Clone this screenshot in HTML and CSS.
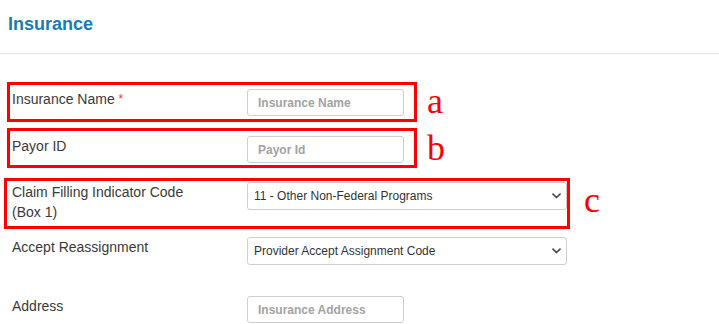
FILE: index.html
```html
<!DOCTYPE html>
<html lang="en">
<head>
<meta charset="utf-8">
<title>Insurance</title>
<link rel="stylesheet" href="styles.css">
</head>
<body>
<header class="header">
  <h1 class="title">Insurance</h1>
</header>
<form class="form">
  <div class="row row--a">
    <label class="label">Insurance Name <span class="req">*</span></label>
    <input class="input" type="text" placeholder="Insurance Name">
    <span class="mark mark--a"></span>
    <span class="tag tag--a">a</span>
  </div>
  <div class="row row--b">
    <label class="label">Payor ID</label>
    <input class="input" type="text" placeholder="Payor Id">
    <span class="mark mark--b"></span>
    <span class="tag tag--b">b</span>
  </div>
  <div class="row row--c">
    <label class="label">Claim Filling Indicator Code (Box 1)</label>
    <span class="select-wrap">
      <select class="select"><option>11 - Other Non-Federal Programs</option></select>
      <svg class="chev" width="9" height="6" viewBox="0 0 9 6"><path d="M1 1.2l3.5 3.3 3.5-3.3" fill="none" stroke="#4a4a4a" stroke-width="1.7" stroke-linecap="round" stroke-linejoin="round"/></svg>
    </span>
    <span class="mark mark--c"></span>
    <span class="tag tag--c">c</span>
  </div>
  <div class="row row--d">
    <label class="label">Accept Reassignment</label>
    <span class="select-wrap">
      <select class="select"><option>Provider Accept Assignment Code</option></select>
      <svg class="chev" width="9" height="6" viewBox="0 0 9 6"><path d="M1 1.2l3.5 3.3 3.5-3.3" fill="none" stroke="#4a4a4a" stroke-width="1.7" stroke-linecap="round" stroke-linejoin="round"/></svg>
    </span>
  </div>
  <div class="row">
    <label class="label">Address</label>
    <input class="input" type="text" placeholder="Insurance Address">
  </div>
</form>
</body>
</html>
```

FILE: styles.css
```css
* { box-sizing: border-box; }
html, body { margin: 0; padding: 0; background: #fff; }
body {
  font-family: "Liberation Sans", Arial, sans-serif;
  color: #333;
  width: 719px;
  height: 324px;
  overflow: hidden;
}
.header {
  height: 54px;
  padding: 13px 8px 0;
  border-bottom: 1px solid #e3e3e3;
}
.title {
  margin: 0;
  font-size: 18px;
  line-height: 22px;
  font-weight: 700;
  color: #1a7ab5;
}
.form {
  padding-top: 35px;
}
.row {
  position: relative;
  display: flex;
  align-items: flex-start;
  padding-left: 12px;
}
.row--a { margin-bottom: 20px; }
.row--b { margin-bottom: 19px; }
.row--c { margin-bottom: 15px; }
.row--d { margin-bottom: 31px; }
.label {
  width: 235px;
  flex: none;
  padding-right: 35px;
  font-size: 14px;
  line-height: 20px;
  color: #3a3a3a;
}
.req { color: #e53935; font-size: 12px; vertical-align: top; }
.input {
  width: 157px;
  height: 27px;
  margin: 0;
  padding: 0 10px;
  border: 1px solid #cfcfcf;
  border-radius: 3px;
  font-family: "Liberation Sans", Arial, sans-serif;
  font-size: 12px;
  color: #333;
  background: #fff;
}
.input::placeholder { color: #a3a3a3; font-weight: 700; }
.select-wrap {
  position: relative;
  display: block;
  width: 320px;
}
.select {
  display: block;
  width: 320px;
  height: 28px;
  margin: 0;
  padding: 0 24px 0 6px;
  border: 1px solid #cfcfcf;
  border-radius: 3px;
  background: #fff;
  font-family: "Liberation Sans", Arial, sans-serif;
  font-size: 12px;
  color: #333;
  -webkit-appearance: none;
  appearance: none;
}
.chev {
  position: absolute;
  right: 6px;
  top: 11px;
  pointer-events: none;
}
.mark {
  position: absolute;
  border: 3px solid #ff0000;
  pointer-events: none;
}
.mark--a { left: 7px; top: -7px; width: 410px; height: 40px; }
.mark--b { left: 7px; top: -8px; width: 410px; height: 40px; }
.mark--c { left: 4px; top: -4px; width: 566px; height: 51px; }
.tag {
  position: absolute;
  font-family: "Liberation Serif", "Times New Roman", serif;
  font-size: 36px;
  line-height: 36px;
  color: #ff0000;
}
.tag--a { left: 427px; top: -6px; }
.tag--b { left: 427px; top: -6px; }
.tag--c { left: 584px; top: 0; }
```
